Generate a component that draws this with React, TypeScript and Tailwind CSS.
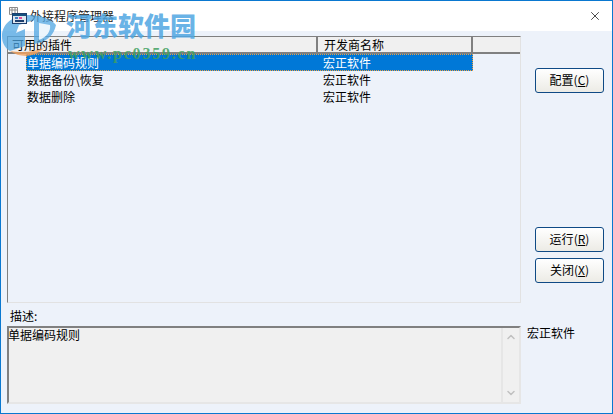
import { ChevronDown, ChevronUp, X } from "lucide-react";

const rows = ["单据编码规则", "数据备份\\恢复", "数据删除"];
const font = { fontFamily: '"Noto Sans CJK SC", "Liberation Sans", sans-serif' };

function WinButton({ label, hot }: { label: string; hot: string }) {
    return (
        <button className="w-[69px] h-[25px] pb-[2px] rounded-[3px] border border-[#0f4a85] bg-gradient-to-b from-[#ffffff] to-[#ecebe5] text-[12px] text-black flex items-center justify-center">
            {label}(<span className="underline">{hot}</span>)
        </button>
    );
}

function Watermark() {
    return (
        <div className="absolute left-0 top-0 w-[240px] h-[70px] pointer-events-none">
            <svg className="absolute left-0 top-[13px]" width="58" height="44" viewBox="0 0 58 44">
                <path d="M27 1C12 1 1 10 1 22c0 7 3 12 8 15l15-5V15l-9 4 3-8 15-5v24l5-1c10-3 15-9 17-18C50 5 40 1 27 1z" fill="#4fa6e2" opacity="0.75" />
                <path d="M38 9l11 2c1 6-3 12-11 15z" fill="#ffffff" opacity="0.85" />
                <path d="M9 37c10 7 24 7 34-3-10 4-22 5-34 3z" fill="#f2a35e" opacity="0.8" />
            </svg>
            <div className="absolute left-[65px] top-[6px] text-[26px] leading-[36px] font-black text-[#4fa6e2]/85 whitespace-nowrap">河东软件园</div>
            <div className="absolute left-[67px] top-[44px] text-[16px] leading-[18px] font-bold text-[#3f9f5f]/85 whitespace-nowrap tracking-[1.8px]" style={{ fontFamily: '"Liberation Serif", serif' }}>www.pc0359.cn</div>
        </div>
    );
}

export default function App() {
    return (
        <div className="relative w-[613px] h-[414px] flex flex-col border border-[#0a78d0] bg-[#edf2fa] overflow-hidden text-[12px] leading-[17px] text-black" style={font}>
            {/* Title bar */}
            <div className="h-[30px] shrink-0 bg-white flex items-center pl-[8px] pr-[10px]">
                <svg width="19" height="17" viewBox="0 0 19 17" className="-mt-[1px] relative z-10">
                    <path d="M0.5 0.5h8v7h-8zM0.5 3h8M3 0.5v7M6 0.5v7" fill="none" stroke="#8a8a8a" />
                    <rect x="3.5" y="6.5" width="14" height="10" fill="#dfe6ee" stroke="#1c3f6e" />
                    <rect x="4" y="7" width="13" height="2" fill="#14507f" />
                    <rect x="6" y="10" width="3" height="2" fill="#3f7fc0" />
                    <rect x="10" y="10" width="3" height="2" fill="#e04f9c" />
                    <rect x="6" y="13" width="9" height="2" fill="#1c3f6e" />
                </svg>
                <span className="ml-[2px] -mt-[1px] text-[#222]">外接程序管理器</span>
                <X className="ml-auto" size={14} strokeWidth={1.2} />
            </div>

            {/* Body */}
            <div className="flex-1 flex flex-col pl-[6px] pr-[8px] pt-[5px]">
                <div className="flex">
                    <div className="w-[514px] h-[267px] shrink-0 border border-[#e2e2e2] border-t-[#808080] border-l-[#808080] flex flex-col">
                        <div className="h-[17px] shrink-0 flex bg-[#f0f0f0] border-b-2 border-[#808080] text-[12px] leading-[15px]">
                            <div className="w-[310px] pl-[4px] border-r-2 border-[#808080]">可用的插件</div>
                            <div className="w-[155px] pl-[6px] border-r-2 border-[#808080]">开发商名称</div>
                            <div className="flex-1" />
                        </div>
                        {rows.map((name, i) => (
                            <div key={name} className={`h-[17px] ml-[18px] w-[447px] flex ${i === 0 ? "bg-[#0078d7] text-white outline-1 -outline-offset-1 outline-dotted outline-[#f0a040]" : ""}`}>
                                <div className="w-[297px] pl-[1px]">{name}</div>
                                <div>宏正软件</div>
                            </div>
                        ))}
                    </div>
                    <div className="flex-1 flex flex-col items-end pt-[32px]">
                        <WinButton label="配置" hot="C" />
                        <div className="mt-[134px]"><WinButton label="运行" hot="R" /></div>
                        <div className="mt-[6px]"><WinButton label="关闭" hot="X" /></div>
                    </div>
                </div>

                <div className="pl-[3px] mt-[4px] h-[19px]">描述:</div>

                <div className="flex">
                    <div className="w-[514px] h-[78px] shrink-0 flex bg-[#f0f0f0] border-2 border-[#e6e6e6] border-t-[#808080] border-l-[#808080]">
                        <div className="flex-1 -ml-[1px] leading-[14px]">单据编码规则</div>
                        <div className="w-[18px] border-l-2 border-[#e6e6e6] flex flex-col items-center justify-between py-[3px] text-[#c0c0c0]">
                            <ChevronUp size={12} strokeWidth={3} />
                            <ChevronDown size={12} strokeWidth={3} />
                        </div>
                    </div>
                    <div className="ml-[6px] leading-[14px]">宏正软件</div>
                </div>
            </div>

            <Watermark />
        </div>
    );
}
